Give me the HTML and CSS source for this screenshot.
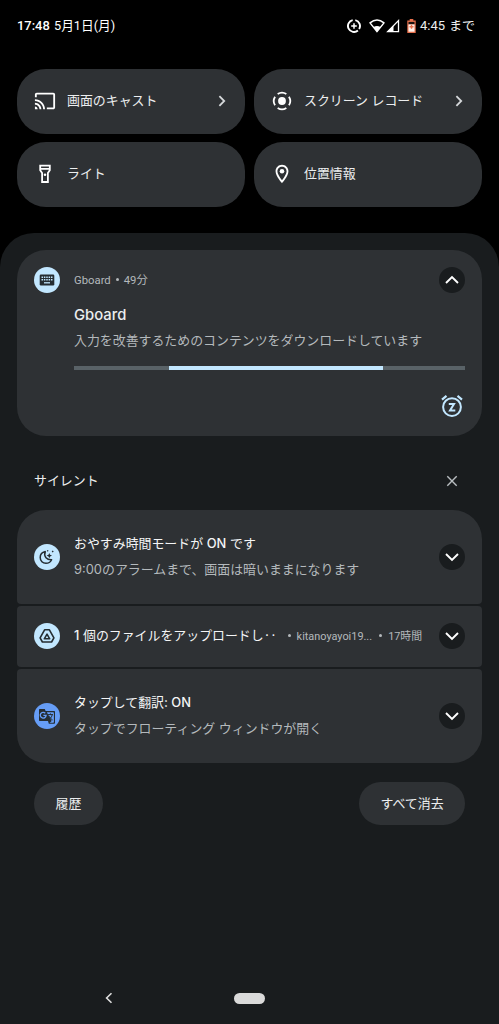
FILE: index.html
```
<!DOCTYPE html>
<html lang="ja">
<head>
<meta charset="utf-8">
<title>通知</title>
<link rel="stylesheet" href="styles.css">
</head>
<body>
<div class="screen">
  <header class="status">
    <div class="clock"><span class="time">17:48</span><span class="date">5月1日(月)</span></div>
    <div class="indicators">
      <svg class="saver" width="14" height="14" viewBox="0 0 14 14" fill="none" stroke="#fff" stroke-width="1.9"><path d="M8.3 1.1A6 6 0 0 1 12.1 10.1M10.9 11.5A6 6 0 1 1 5.7 1.1"/><path d="M7 4.2v5.6M4.2 7h5.6" stroke-width="1.5"/></svg>
      <svg class="wifi" width="16" height="14" viewBox="0 0 16 14"><path d="M1 3.9Q8-1.9 15 3.9L8 12.6Z" fill="none" stroke="#fff" stroke-width="1.5" stroke-linejoin="round"/><path d="M4.5 8Q8 5.8 11.5 8L8 12.8Z" fill="#fff"/></svg>
      <svg class="signal" width="14" height="14" viewBox="0 0 14 14"><path d="M12.5 1.6v11H1.7Z" fill="none" stroke="#fff" stroke-width="1.3"/><path d="M7.5 6.5v6.5H1Z" fill="#fff"/></svg>
      <svg class="battery" width="9" height="14" viewBox="0 0 9 14"><path d="M2.7 0h3.6v1.5h2.4V14H.3V1.5h2.4Z" fill="#e8704c"/><path d="M1.5 2.9h6v2.5h-6Z" fill="#1b1310"/><path d="M1.5 5.4h6v7.3h-6Z" fill="#fff2ec"/><path d="M4.5 5.8v4M2.5 7.8h4" stroke="#e8704c" stroke-width="1.4"/></svg>
      <span class="remaining"><span>4:45</span><span>まで</span></span>
    </div>
  </header>

  <section class="tiles">
    <div class="tile">
      <svg class="tile-icon" width="22" height="22" viewBox="0 0 24 24" fill="#fff"><path d="M21 3H3c-1.1 0-2 .9-2 2v3h2V5h18v14h-7v2h7c1.1 0 2-.9 2-2V5c0-1.1-.9-2-2-2zM1 18v3h3c0-1.66-1.34-3-3-3zm0-4v2c2.76 0 5 2.24 5 5h2c0-3.87-3.13-7-7-7zm0-4v2c4.97 0 9 4.03 9 9h2c0-6.08-4.93-11-11-11z"/></svg>
      <span class="tile-label">画面のキャスト</span>
      <svg class="go" width="8" height="12" viewBox="0 0 8 12"><path d="M1.4 1.2 6.2 6l-4.8 4.8"/></svg>
    </div>
    <div class="tile">
      <svg class="tile-icon" width="22" height="22" viewBox="0 0 22 22"><circle cx="11" cy="11" r="3.9" fill="#fff"/><path d="M6.65 4.05A8.2 8.2 0 0 1 15.35 4.05M17.95 6.65A8.2 8.2 0 0 1 17.95 15.35M15.35 17.95A8.2 8.2 0 0 1 6.65 17.95M4.05 15.35A8.2 8.2 0 0 1 4.05 6.65" fill="none" stroke="#fff" stroke-width="1.8"/></svg>
      <span class="tile-label">スクリーン レコード</span>
      <svg class="go" width="8" height="12" viewBox="0 0 8 12"><path d="M1.4 1.2 6.2 6l-4.8 4.8"/></svg>
    </div>
    <div class="tile">
      <svg class="tile-icon" width="22" height="22" viewBox="0 0 22 22" fill="none" stroke="#fff" stroke-width="1.8"><path d="M6.2 2.6h9.6v4.6l-1.9 2.9v8.9H8.1v-8.9L6.2 7.2ZM6.2 5.8h9.6"/><circle cx="11" cy="11.8" r="1.3" fill="#fff" stroke="none"/></svg>
      <span class="tile-label">ライト</span>
    </div>
    <div class="tile">
      <svg class="tile-icon" width="22" height="22" viewBox="0 0 24 24" fill="#fff"><path d="M12 2C8.13 2 5 5.13 5 9c0 5.25 7 13 7 13s7-7.75 7-13c0-3.87-3.13-7-7-7zM7 9c0-2.76 2.24-5 5-5s5 2.24 5 5c0 2.88-2.88 7.19-5 9.88C9.92 16.21 7 11.85 7 9z"/><circle cx="12" cy="9" r="2.5"/></svg>
      <span class="tile-label">位置情報</span>
    </div>
  </section>

  <main class="shade">
    <article class="card gboard">
      <div class="app-icon"><svg width="16" height="12" viewBox="0 0 16 12"><rect x=".7" y=".6" width="14.6" height="10.8" rx="1.2" fill="#252d32"/><path d="M2.5 3.2h11M2.5 5.8h11" stroke="#c2e7ff" stroke-width="1.5" stroke-dasharray="1.5 .87"/><path d="M5 8.8h6" stroke="#c2e7ff" stroke-width="1.3"/></svg></div>
      <div class="body">
        <div class="meta">Gboard<i></i>49分</div>
        <h2 class="headline">Gboard</h2>
        <p class="text">入力を改善するためのコンテンツをダウンロードしています</p>
        <div class="progress"><div class="progress-bar"></div></div>
      </div>
      <div class="side">
        <div class="expand"><svg width="16" height="10" viewBox="0 0 16 10"><path d="M2 8l6-6 6 6"/></svg></div>
        <svg class="snooze" width="24" height="24" viewBox="0 0 24 24" fill="none" stroke="#c2e7ff"><circle cx="12" cy="13.1" r="8.9" stroke-width="2"/><path d="M2 5.6 6.5 1.9M17.5 1.9 22 5.6" stroke-width="2.2"/><path d="M8.8 10h5.2L10 16.4h5.3" stroke-width="2"/></svg>
      </div>
    </article>

    <div class="section-title"><span>サイレント</span><svg width="12" height="12" viewBox="0 0 12 12"><path d="M1.3 1.3l9.4 9.4M10.7 1.3l-9.4 9.4" stroke="#b9bec1" stroke-width="1.4"/></svg></div>

    <div class="group">
      <article class="card row">
        <div class="app-icon"><svg width="16" height="16" viewBox="0 0 16 16"><path d="M6.3 2.6C3.2 3.3 1.2 5.6 1.2 8.6c0 3.3 2.6 5.7 5.7 5.7 2.6 0 4.6-1.3 5.7-3.6-4.5.3-8.4-3.1-6.3-8.1Z" fill="none" stroke="#252d32" stroke-width="1.5" stroke-linejoin="round"/><path d="m10.3 3.9.8 1.9 1.9.8-1.9.8-.8 1.9-.8-1.9-1.9-.8 1.9-.8ZM8.7.9l.9.9-.9.9-.9-.9ZM13.7 1.6l1 1-1 1-1-1Z" fill="#252d32"/></svg></div>
        <div class="body"><h3 class="title">おやすみ時間モードが <b>ON</b> です</h3><p class="text"><span class="num">9:00</span>のアラームまで、画面は暗いままになります</p></div>
        <div class="expand"><svg width="16" height="10" viewBox="0 0 16 10"><path d="M2 2l6 6 6-6"/></svg></div>
      </article>
      <article class="card row single">
        <div class="app-icon"><svg width="16" height="16" viewBox="0 0 16 16" fill="none" stroke="#252d32" stroke-width="1.6" stroke-linejoin="round"><path d="M5.6 1.8h4.8l4.5 8-2.3 4.2H3.4L1.1 9.8Z"/><path d="M8 6.1 5.3 10.8h5.4Z"/></svg></div>
        <div class="body inline"><h3 class="title"><b>1</b> 個のファイルをアップロードし<span class="dots">‥</span></h3><span class="meta account"><i></i>kitanoyayoi19...</span><span class="meta age"><i></i>17時間</span></div>
        <div class="expand"><svg width="16" height="10" viewBox="0 0 16 10"><path d="M2 2l6 6 6-6"/></svg></div>
      </article>
      <article class="card row">
        <div class="app-icon translate"><svg width="18" height="16" viewBox="0 0 18 16"><path d="M2 1h4.8l.8 2.1H16c.7 0 1 .4 1 1v10.7c0 .6-.4 1-1 1h-5.2l-.8-2.7H2c-.7 0-1-.4-1-1V2c0-.6.4-1 1-1Z" fill="#252d32"/><path d="M8.8 4.2h6.4c.5 0 .7.2.7.7v9.2c0 .4-.3.6-.7.6h-3.5l2-1.8Z" fill="#669df6"/><path d="M10 6.6h5M12.4 5.4v1.2M14.2 6.8c-.4 2-1.5 3.4-3.1 4.4M11.1 8.2c.8 1.7 2 2.8 3.5 3.8" fill="none" stroke="#252d32"/><path d="M7.3 5.2A2.9 2.9 0 1 0 8.1 7.4H5.4" fill="none" stroke="#669df6" stroke-width="1.3"/></svg></div>
        <div class="body"><h3 class="title">タップして翻訳<b>: ON</b></h3><p class="text">タップでフローティング ウィンドウが開く</p></div>
        <div class="expand"><svg width="16" height="10" viewBox="0 0 16 10"><path d="M2 2l6 6 6-6"/></svg></div>
      </article>
    </div>

    <footer class="actions"><button class="pill history">履歴</button><button class="pill clear">すべて消去</button></footer>

    <nav class="navbar"><svg width="8" height="12" viewBox="0 0 8 12"><path d="M6.5 1.2 1.6 6l4.9 4.8" fill="none" stroke="#dedede" stroke-width="1.6"/></svg><span class="home"></span></nav>
  </main>
</div>
</body>
</html>
```
FILE: styles.css
```
* { box-sizing: border-box; margin: 0; padding: 0; }
body {
  width: 499px;
  height: 1024px;
  overflow: hidden;
  background: #000;
  color: #eceeef;
  font: 400 12.91px/20px Inter, "Noto Sans CJK JP", sans-serif;
  white-space: nowrap;
}
svg { display: block; flex: none; }
.screen { display: flex; flex-direction: column; height: 1024px; }

.status { display: flex; justify-content: space-between; height: 69px; padding: 16px 24px 0 17px; }
.clock { display: flex; color: #fff; font-family: Roboto, "Noto Sans CJK JP", sans-serif; }
.time { width: 37px; font-size: 12.9px; font-weight: 500; line-height: 20px; }
.date { font-size: 12.7px; line-height: 20px; }
.indicators { display: flex; height: 20px; align-items: center; }
.saver { margin-right: 8px; }
.wifi { margin-right: 1px; }
.signal { margin-right: 7px; }
.battery { margin-right: 4px; }
.remaining { display: flex; justify-content: space-between; width: 55px; padding-bottom: 1px; font: 13px/19px Roboto, "Noto Sans CJK JP", sans-serif; }

.tiles { display: grid; grid-template-columns: 228px 228px; grid-auto-rows: 64.5px; gap: 8.5px 9px; padding-left: 17px; height: 164px; }
.tile { display: flex; align-items: center; padding: 0 19px 0 17px; border-radius: 29px; background: #2e3134; }
.tile-label { flex: 1; margin-left: 11px; padding-bottom: 3px; }
.go path { fill: none; stroke: #d5d8da; stroke-width: 1.8; }

.shade { flex: 1; display: flex; flex-direction: column; padding: 17px 17px 0; border-radius: 34px 34px 0 0; background: #191c1e; }
.card { display: flex; background: #2e3134; }
.app-icon { flex: none; display: grid; place-items: center; width: 26px; height: 26px; border-radius: 50%; background: #c2e7ff; }
.translate { background: #669df6; }
.body { flex: 1; min-width: 0; margin-left: 14px; }
.expand { flex: none; display: grid; place-items: center; width: 26px; height: 26px; border-radius: 50%; background: #191c1e; }
.expand path { fill: none; stroke: #fff; stroke-width: 1.9; }
.meta { font: 11.3px/20px Roboto, "Noto Sans CJK JP", sans-serif; color: #b4b9bc; }
.meta i { display: inline-block; width: 3px; height: 3px; margin: 0 6px; border-radius: 50%; background: #b4b9bc; vertical-align: 3px; }
.text { color: #b4b9bc; }

.gboard { height: 186px; padding: 17px 17px 0; border-radius: 29px; }
.gboard .meta { height: 26px; padding-top: 4px; }
.gboard .meta i { margin: 0 5px; }
.headline { margin-top: 11px; font-size: 14.8px; font-weight: 500; line-height: 22px; }
.gboard .text { margin-top: 4px; }
.gboard .body { margin-right: -26px; }
.progress { height: 4px; margin-top: 15.5px; background: #596267; }
.progress-bar { width: 214px; height: 4px; margin-left: 95px; background: #c2e7ff; }
.side { display: flex; flex-direction: column; align-items: center; }
.snooze { margin-top: 101px; }

.section-title { display: flex; justify-content: space-between; align-items: center; height: 74px; padding: 16px 24px 0 17px; }
.section-title span { padding-bottom: 3px; }

.group { display: grid; grid-template-rows: 93.5px 61px 94px; gap: 2px; }
.row { align-items: center; padding: 0 17px; border-radius: 4px; }
.row:first-child { border-radius: 29px 29px 4px 4px; }
.row:last-child { border-radius: 4px 4px 29px 29px; }
.row .body { padding-bottom: 2px; }
.title { font-size: 12.91px; font-weight: 400; color: #f4f5f6; }
.title b { font-weight: 500; }
.dots { font-family: "Noto Sans CJK JP", sans-serif; }
.row .text { margin-top: 6px; }
.inline { display: flex; align-items: center; }
.inline .meta { padding-top: 3px; font-size: 10.9px; }
.account { margin-left: 5px; }
.age { margin-left: 1px; }

.actions { display: flex; justify-content: space-between; padding: 19.5px 17px 0; }
.pill { height: 43px; border: 0; border-radius: 22px; background: #2e3134; color: #eceeef; font: inherit; padding-bottom: 2px; }
.history { width: 69px; }
.clear { width: 106px; }

.navbar { display: flex; align-items: center; gap: 121px; height: 12px; margin: auto 0 20px 88px; }
.home { width: 31px; height: 11px; border-radius: 6px; background: #dadada; }
```
